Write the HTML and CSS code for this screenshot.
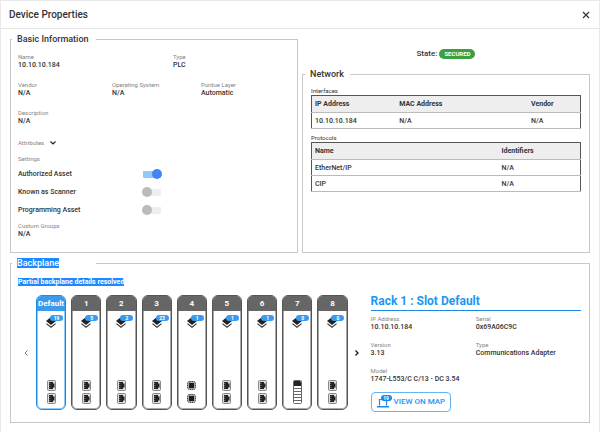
FILE: index.html
```html
<!DOCTYPE html>
<html lang="en">
<head>
<meta charset="utf-8">
<title>Device Properties</title>
<link rel="stylesheet" href="styles.css">
</head>
<body>
<svg class="sprite" aria-hidden="true">
  <symbol id="layers" viewBox="0 0 10 12">
    <path d="M5 1 0 5l5 4 5-4z" fill="#222"/>
    <path d="M.4 7.6 5 11.2l4.6-3.6" fill="none" stroke="#333" stroke-width="1.1"/>
  </symbol>
  <symbol id="port" viewBox="0 0 9 11">
    <rect x=".5" y=".5" width="8" height="10" rx="1" fill="#ddd" stroke="#888"/>
    <path d="M2 2h4v1.500h1.500v4H6V9H2z" fill="#222"/>
    <path d="M2 3.500h1.500M2 5.500h1.500M2 7.500h1.500" stroke="#888" stroke-width=".7"/>
  </symbol>
  <symbol id="chip" viewBox="0 0 9 11">
    <rect x=".5" y="1.500" width="8" height="8" rx="2" fill="#aaa" stroke="#444" stroke-dasharray="1.400 .6"/>
    <rect x="2" y="3" width="5" height="5" fill="#1c1c1c"/>
  </symbol>
  <symbol id="terminal" viewBox="0 0 9 24">
    <rect x=".5" y=".5" width="8" height="23" rx="1" fill="#fff" stroke="#666"/>
    <path d="M1 1h7v5H1z" fill="#222"/>
    <path d="M7 1h1v2z" fill="#aaa"/>
    <path d="M1 8.500h7M1 11.500h7M1 14.500h7M1 17.500h7M1 20.500h7" stroke="#666"/>
  </symbol>
</svg>
<main class="dialog">
  <header class="dialog-head">
    <h1>Device Properties</h1>
    <button class="icon-button" type="button" aria-label="Close"><svg width="8" height="8" viewBox="0 0 8 8"><path d="m1 1 6 6M7 1 1 7" stroke="#333" stroke-width="1.200"/></svg></button>
  </header>
  <div class="panels">
    <fieldset class="panel basic">
      <legend>Basic Information</legend>
      <dl class="row two">
        <div><dt>Name</dt><dd>10.10.10.184</dd></div>
        <div><dt>Type</dt><dd>PLC</dd></div>
      </dl>
      <dl class="row three">
        <div><dt>Vendor</dt><dd>N/A</dd></div>
        <div><dt>Operating System</dt><dd>N/A</dd></div>
        <div><dt>Purdue Layer</dt><dd>Automatic</dd></div>
      </dl>
      <dl class="row"><div><dt>Description</dt><dd>N/A</dd></div></dl>
      <div class="attributes">
        <span class="caption">Attributes</span>
        <button class="icon-button expand" type="button" aria-label="Show attributes"><svg width="8" height="8" viewBox="0 0 8 8"><path d="m1.500 2.500 2.500 2.500 2.500-2.500" fill="none" stroke="#222" stroke-width="1.200"/></svg></button>
      </div>
      <div class="settings">
        <span class="caption">Settings</span>
        <label class="setting">Authorized Asset<input type="checkbox" checked></label>
        <label class="setting">Known as Scanner<input type="checkbox"></label>
        <label class="setting">Programming Asset<input type="checkbox"></label>
      </div>
      <dl class="row groups"><div><dt>Custom Groups</dt><dd>N/A</dd></div></dl>
    </fieldset>
    <div class="side">
      <p class="state">State: <span class="pill">SECURED</span></p>
      <fieldset class="panel network">
        <legend>Network</legend>
        <table>
          <caption>Interfaces</caption>
          <colgroup><col class="col-ip"><col class="col-mac"><col></colgroup>
          <thead><tr><th>IP Address</th><th>MAC Address</th><th>Vendor</th></tr></thead>
          <tbody><tr><td>10.10.10.184</td><td>N/A</td><td>N/A</td></tr></tbody>
        </table>
        <table>
          <caption>Protocols</caption>
          <colgroup><col class="col-name"><col></colgroup>
          <thead><tr><th>Name</th><th>Identifiers</th></tr></thead>
          <tbody><tr><td>EtherNet/IP</td><td>N/A</td></tr><tr><td>CIP</td><td>N/A</td></tr></tbody>
        </table>
      </fieldset>
    </div>
    <fieldset class="panel backplane">
      <legend><span class="marked">Backplane</span></legend>
      <div class="rack">
        <p class="notice"><span class="marked">Partial backplane details resolved</span></p>
        <div class="carousel">
          <button class="icon-button" type="button" aria-label="Previous slots"><svg width="6" height="8" viewBox="0 0 6 8"><path d="M4.500 1.500 2 4l2.500 2.500" fill="none" stroke="#777"/></svg></button>
          <ol class="slots">
            <li class="slot selected"><h2>Default</h2><div class="stack"><svg><use href="#layers"/></svg><b>19</b></div><div class="ports"><svg><use href="#port"/></svg><svg><use href="#port"/></svg></div></li>
            <li class="slot"><h2>1</h2><div class="stack"><svg><use href="#layers"/></svg><b>5</b></div><div class="ports"><svg><use href="#port"/></svg><svg><use href="#port"/></svg></div></li>
            <li class="slot"><h2>2</h2><div class="stack"><svg><use href="#layers"/></svg><b>2</b></div><div class="ports"><svg><use href="#port"/></svg><svg><use href="#port"/></svg></div></li>
            <li class="slot"><h2>3</h2><div class="stack"><svg><use href="#layers"/></svg><b>23</b></div><div class="ports"><svg><use href="#port"/></svg><svg><use href="#port"/></svg></div></li>
            <li class="slot"><h2>4</h2><div class="stack"><svg><use href="#layers"/></svg><b>1</b></div><div class="ports"><svg><use href="#chip"/></svg><svg><use href="#chip"/></svg></div></li>
            <li class="slot"><h2>5</h2><div class="stack"><svg><use href="#layers"/></svg><b>1</b></div><div class="ports"><svg><use href="#port"/></svg><svg><use href="#port"/></svg></div></li>
            <li class="slot"><h2>6</h2><div class="stack"><svg><use href="#layers"/></svg><b>1</b></div><div class="ports"><svg><use href="#port"/></svg><svg><use href="#port"/></svg></div></li>
            <li class="slot"><h2>7</h2><div class="stack"><svg><use href="#layers"/></svg><b>0</b></div><div class="ports"><svg class="tall"><use href="#terminal"/></svg></div></li>
            <li class="slot"><h2>8</h2><div class="stack"><svg><use href="#layers"/></svg><b>0</b></div><div class="ports"><svg><use href="#port"/></svg><svg><use href="#port"/></svg></div></li>
          </ol>
          <button class="icon-button" type="button" aria-label="Next slots"><svg width="6" height="8" viewBox="0 0 6 8"><path d="M1.500 1.500 4 4 1.500 6.500" fill="none" stroke="#111" stroke-width="1.200"/></svg></button>
        </div>
      </div>
      <section class="detail">
        <h2>Rack 1 : Slot Default</h2>
        <dl>
          <div><dt>IP Address</dt><dd>10.10.10.184</dd></div>
          <div><dt>Serial</dt><dd>0x69A06C9C</dd></div>
          <div><dt>Version</dt><dd>3.13</dd></div>
          <div><dt>Type</dt><dd>Communications Adapter</dd></div>
          <div class="wide"><dt>Model</dt><dd>1747-L553/C C/13 - DC 3.54</dd></div>
        </dl>
        <button class="map-button" type="button">
          <span class="map-icon"><svg width="12" height="12" viewBox="0 0 12 12"><path d="M2.500 9.500v-6h7v6" fill="none" stroke="#1e88e5" stroke-width="1.200"/><path d="M0 10h12v1.500H0z" fill="#1e88e5"/></svg><b>19</b></span>
          VIEW ON MAP
        </button>
      </section>
    </fieldset>
  </div>
</main>
</body>
</html>
```

FILE: styles.css
```css
* { box-sizing: border-box; }
body { margin: 0; background: #fff; color: #333; font: 500 7px/8px Roboto, "Liberation Sans", sans-serif; }
h1, h2, p, dl, dd, ol { margin: 0; padding: 0; }
svg { display: block; }
button { font: inherit; cursor: pointer; }
.sprite { position: absolute; width: 0; height: 0; }

.dialog { min-height: 100vh; border: 1px solid #e9e9e9; border-bottom: 0; }
.dialog-head { display: flex; align-items: center; justify-content: space-between; height: 28px; padding: 0 8px; border-bottom: 1px solid #e4e4e4; }
h1 { font-size: 10px; line-height: 12px; font-weight: 500; }
.icon-button { display: flex; padding: 1px; border: 0; background: none; }

.panels { display: grid; grid-template-columns: 1fr 1fr; column-gap: 4px; row-gap: 4px; padding: 4px 9px 8px; }
.panel { min-width: 0; margin: 0; border: 1px solid #c8c8c8; }
legend { min-width: 84px; margin-left: -6px; padding: 0 5px; font-size: 9px; line-height: 12px; }
.network legend { min-width: 0; padding-right: 6px; }

.basic { padding: 8px 7px 14px; }
.row { display: grid; margin-bottom: 12px; }
.two { grid-template-columns: 155fr 117fr; }
.three { grid-template-columns: 94fr 89fr 89fr; }
dt, .caption { color: #858585; font-size: 6px; font-weight: 400; }
.attributes { display: flex; align-items: center; gap: 3px; height: 12px; }
.expand { padding: 2px; }
.settings { margin-top: 6px; }
.caption { display: block; }
.settings .caption { margin-bottom: 2px; }
.setting { display: flex; align-items: center; justify-content: space-between; width: 144px; height: 18px; }
.setting input { appearance: none; width: 20px; height: 10px; margin: 0; display: flex; align-items: center; background: linear-gradient(#eee, #eee) center / 18px 7px no-repeat; border-radius: 5px; }
.setting input::before { content: ""; width: 10px; height: 10px; border-radius: 50%; background: #bbb; }
.setting input:checked { justify-content: flex-end; background-image: linear-gradient(#90caf9, #90caf9); }
.setting input:checked::before { background: #4285f4; }
.groups { margin: 3px 0 0; }

.side { display: flex; flex-direction: column; }
.state { display: flex; align-items: center; justify-content: center; gap: 2px; margin: 16px 0 9px; font-size: 8px; line-height: 10px; }
.pill { padding: 0 5px; border-radius: 5px; background: #3c9f40; color: #fff; font-size: 6px; font-weight: 700; }
.network { flex: 1; padding: 7px 8px; }
table { width: 100%; table-layout: fixed; border-collapse: collapse; border: 1px solid #555; border-bottom-color: #999; }
table + table { margin-top: 5px; }
caption { font-size: 6px; font-weight: 400; text-align: left; }
th, td { padding: 0 3px; border-bottom: 1px solid #bbb; text-align: left; }
th { height: 17px; background: #eee; font-weight: 700; }
td { height: 16px; font-weight: 500; }
.col-ip { width: 31.500%; }
.col-mac { width: 49%; }
.col-name { width: 69.500%; }

.backplane { grid-column: 1 / -1; display: flex; align-items: flex-start; gap: 10px; padding: 9px 7px 10px; }
.marked { background: #1e88ff; color: #fff; }
.rack { flex: 345 1 0; }
.notice { font-weight: 700; }
.carousel { display: flex; align-items: center; justify-content: space-between; margin-top: 9px; padding-left: 4px; }
.slots { display: grid; grid-template-columns: repeat(9, 1fr); gap: 5px; flex: 1; margin: 0 5px 0 6px; list-style: none; }
.slot { display: flex; flex-direction: column; align-items: center; height: 115px; overflow: hidden; border: 1px solid #555; border-radius: 6px; box-shadow: inset 0 0 0 1px #aaa; }
.slot h2 { align-self: stretch; background: #666; color: #fff; font-size: 8px; line-height: 15px; font-weight: 700; text-align: center; }
.slot.selected { border-color: #1e88e5; box-shadow: inset 0 0 0 1px #90caf9; }
.selected h2 { background: #3a9bee; }
.stack { position: relative; margin-top: 5px; }
.stack svg { width: 10px; height: 12px; }
.stack b, .map-icon b { position: absolute; top: -1px; left: 4px; width: 13px; border-radius: 3px; background: #3a9bee; color: #fff; font-size: 5px; line-height: 6px; text-align: center; }
.map-icon b { width: 11px; background: #1e88e5; }
.ports { display: grid; gap: 2px; margin-top: auto; margin-bottom: 5px; }
.ports svg { width: 9px; height: 11px; }
.ports .tall { height: 24px; }

.detail { flex: 212 1 0; margin-top: 16px; padding-right: 1px; }
.detail h2 { padding-bottom: 2px; border-bottom: 1px solid #1e88e5; color: #2196f3; font-size: 12px; line-height: 14px; font-weight: 700; }
.detail dl { display: grid; grid-template-columns: 1fr 1fr; row-gap: 10px; margin: 4px 0 9px; }
.wide { grid-column: 1 / -1; }
.map-button { display: flex; align-items: center; gap: 5px; height: 20px; padding: 0 5px; border: 1px solid #64b5f6; border-radius: 4px; background: #fff; color: #2196f3; font-size: 8px; }
.map-icon { position: relative; }
```
